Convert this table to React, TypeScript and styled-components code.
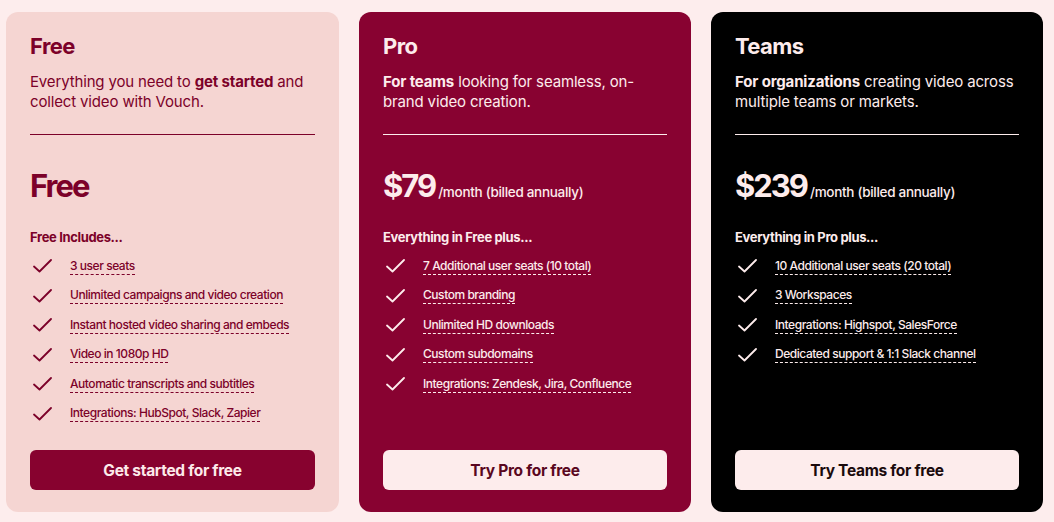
import React from "react";
import styled, { createGlobalStyle } from "styled-components";

const Global = createGlobalStyle`
  html, body { margin: 0; padding: 0; }
  body {
    background: #fdeded;
    font-family: Inter, "Open Sans", "Liberation Sans", sans-serif;
    -webkit-font-smoothing: antialiased;
  }
`;

type Variant = "free" | "pro" | "teams";

const palette: Record<Variant, { bg: string; fg: string; line: string; btnBg: string; btnFg: string }> = {
  free: { bg: "#f5d5d2", fg: "#7c0129", line: "#7c0129", btnBg: "#87022f", btnFg: "#fdeaea" },
  pro: { bg: "#880231", fg: "#fdecec", line: "#fdecec", btnBg: "#fdecec", btnFg: "#5a0720" },
  teams: { bg: "#000000", fg: "#fdecec", line: "#fdecec", btnBg: "#fdecec", btnFg: "#1a0a0c" },
};

const Page = styled.div`
  display: grid;
  grid-template-columns: 333px 332px 332px;
  gap: 20px;
  padding: 12px 10px 10px 6px;
  height: 522px;
  box-sizing: border-box;
`;

const Card = styled.div<{ $v: Variant }>`
  background: ${(p) => palette[p.$v].bg};
  color: ${(p) => palette[p.$v].fg};
  border-radius: 12px;
  padding: 20px 24px 22px 24px;
  display: flex;
  flex-direction: column;
  box-sizing: border-box;
  height: 500px;
`;

const Title = styled.h2`
  margin: 0;
  font-size: 22px;
  line-height: 28px;
  font-weight: 700;
  letter-spacing: -0.6px;
`;

const Desc = styled.p`
  margin: 12px 0 0 0;
  font-size: 15px;
  line-height: 20px;
  font-weight: 400;
  letter-spacing: -0.15px;
  b { font-weight: 700; }
`;

const Divider = styled.hr<{ $v: Variant }>`
  margin: 22px 0 0 0;
  border: none;
  border-top: 1px solid ${(p) => palette[p.$v].line};
  height: 0;
`;

const PriceRow = styled.div`
  margin-top: 31px;
  display: flex;
  align-items: baseline;
  height: 40px;
  line-height: 40px;
`;

const Amount = styled.span`
  font-size: 31px;
  font-weight: 700;
  letter-spacing: -2px;
`;

const Period = styled.span`
  font-size: 13.5px;
  font-weight: 500;
  letter-spacing: -0.3px;
  margin-left: 3px;
`;

const Includes = styled.div`
  margin-top: 22px;
  font-size: 13px;
  line-height: 18px;
  font-weight: 700;
  letter-spacing: -0.35px;
`;

const List = styled.ul`
  list-style: none;
  margin: 10px 0 0 0;
  padding: 0;
  display: flex;
  flex-direction: column;
  gap: 9.6px;
`;

const Item = styled.li`
  display: flex;
  align-items: center;
  height: 20px;
`;

const Check = styled.svg`
  width: 19px;
  height: 14px;
  margin-left: 3px;
  flex: none;
`;

const ItemText = styled.span<{ $v: Variant }>`
  margin-left: 18px;
  font-size: 12px;
  line-height: 15px;
  font-weight: 500;
  letter-spacing: -0.45px;
  border-bottom: 1px dashed ${(p) => palette[p.$v].line};
  padding-bottom: 1px;
`;

const Button = styled.button<{ $v: Variant }>`
  margin-top: auto;
  height: 40px;
  border: none;
  border-radius: 6px;
  background: ${(p) => palette[p.$v].btnBg};
  color: ${(p) => palette[p.$v].btnFg};
  font-family: inherit;
  font-size: 15.5px;
  font-weight: 700;
  letter-spacing: -0.3px;
  cursor: pointer;
`;

const CheckIcon = () => (
  <Check viewBox="0 0 19 14" fill="none">
    <path d="M1 7.5 L6.5 12.5 L18 1" stroke="currentColor" strokeWidth="1.8" strokeLinecap="round" strokeLinejoin="round" />
  </Check>
);

type Plan = {
  v: Variant;
  title: string;
  desc: React.ReactNode;
  amount: string;
  period?: string;
  includes: string;
  items: string[];
  cta: string;
};

const plans: Plan[] = [
  {
    v: "free",
    title: "Free",
    desc: (
      <>
        Everything you need to <b>get started</b> and collect video with Vouch.
      </>
    ),
    amount: "Free",
    includes: "Free Includes...",
    items: [
      "3 user seats",
      "Unlimited campaigns and video creation",
      "Instant hosted video sharing and embeds",
      "Video in 1080p HD",
      "Automatic transcripts and subtitles",
      "Integrations: HubSpot, Slack, Zapier",
    ],
    cta: "Get started for free",
  },
  {
    v: "pro",
    title: "Pro",
    desc: (
      <>
        <b>For teams</b> looking for seamless, on-brand video creation.
      </>
    ),
    amount: "$79",
    period: "/month (billed annually)",
    includes: "Everything in Free plus...",
    items: [
      "7 Additional user seats (10 total)",
      "Custom branding",
      "Unlimited HD downloads",
      "Custom subdomains",
      "Integrations: Zendesk, Jira, Confluence",
    ],
    cta: "Try Pro for free",
  },
  {
    v: "teams",
    title: "Teams",
    desc: (
      <>
        <b>For organizations</b> creating video across multiple teams or markets.
      </>
    ),
    amount: "$239",
    period: "/month (billed annually)",
    includes: "Everything in Pro plus...",
    items: [
      "10 Additional user seats (20 total)",
      "3 Workspaces",
      "Integrations: Highspot, SalesForce",
      "Dedicated support & 1:1 Slack channel",
    ],
    cta: "Try Teams for free",
  },
];

export default function App() {
  return (
    <>
      <Global />
      <Page>
        {plans.map((p) => (
          <Card key={p.v} $v={p.v}>
            <Title>{p.title}</Title>
            <Desc>{p.desc}</Desc>
            <Divider $v={p.v} />
            <PriceRow>
              <Amount>{p.amount}</Amount>
              {p.period && <Period>{p.period}</Period>}
            </PriceRow>
            <Includes>{p.includes}</Includes>
            <List>
              {p.items.map((it) => (
                <Item key={it}>
                  <CheckIcon />
                  <ItemText $v={p.v}>{it}</ItemText>
                </Item>
              ))}
            </List>
            <Button $v={p.v}>{p.cta}</Button>
          </Card>
        ))}
      </Page>
    </>
  );
}
